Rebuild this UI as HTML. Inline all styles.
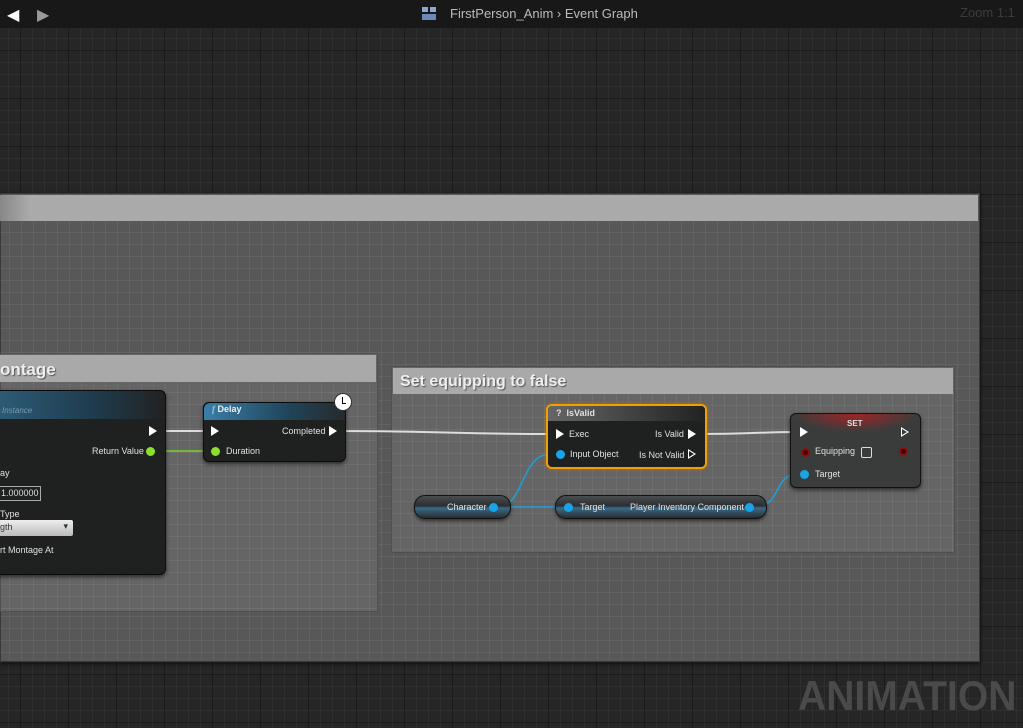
<!DOCTYPE html>
<html><head><style>
*{margin:0;padding:0;box-sizing:border-box}
body{width:1023px;height:728px;overflow:hidden;position:relative;font-family:"Liberation Sans",sans-serif;
background-color:#262626;
background-image:linear-gradient(#1b1b1b 1px,transparent 1px),linear-gradient(90deg,#1b1b1b 1px,transparent 1px),linear-gradient(#2f2f2f 1px,transparent 1px),linear-gradient(90deg,#2f2f2f 1px,transparent 1px);
background-size:48px 48px,48px 48px,12px 12px,12px 12px;background-position:20px 2px,20px 2px,8px 2px,8px 2px}
.a{position:absolute}
.grid{background-image:linear-gradient(rgba(255,255,255,.06) 1px,transparent 1px),linear-gradient(90deg,rgba(255,255,255,.06) 1px,transparent 1px);background-size:12px 12px;background-position:8px 2px}
.node{position:absolute;background:#1f2120;border:1px solid #0c0c0c;border-radius:6px;box-shadow:0 2px 4px rgba(0,0,0,.6);color:#ddd;font-size:9px}
.t{position:absolute;color:#e0e0e0;font-size:9px;white-space:nowrap}
.ex{position:absolute;width:0;height:0;border-top:5px solid transparent;border-bottom:5px solid transparent;border-left:8px solid #fff}
.dot{position:absolute;width:9px;height:9px;border-radius:50%}
.pill{position:absolute;height:24px;border-radius:11px;background:linear-gradient(#4a4d50,#2c2f31 45%,#3a6a88 55%,#2a2c2e);border:1px solid #111;box-shadow:0 2px 3px rgba(0,0,0,.5)}
</style></head><body>
<div class="a" style="left:0;top:0;width:1023px;height:28px;background:#181818"></div>
<div class="a" style="left:7px;top:5px;color:#fff;font-size:16px">&#9664;</div>
<div class="a" style="left:37px;top:5px;color:#999;font-size:16px">&#9654;</div>
<div class="a" style="left:422px;top:7px;width:6px;height:5px;background:#8aa9d8"></div>
<div class="a" style="left:430px;top:7px;width:6px;height:5px;background:#8aa9d8"></div>
<div class="a" style="left:422px;top:14px;width:14px;height:6px;background:#6d89b8"></div>
<div class="a" style="left:450px;top:6px;color:#bbb;font-size:13px">FirstPerson_Anim &#8250; Event Graph</div>
<div class="a" style="left:960px;top:5px;color:#3c3c3c;font-size:13px">Zoom 1:1</div>

<div class="a grid" style="left:0;top:193px;width:980px;height:469px;background-color:#585858;border:1px solid #3a3a3a;box-shadow:0 2px 4px rgba(0,0,0,.6)"></div>
<div class="a" style="left:0;top:195px;width:978px;height:26px;background:linear-gradient(90deg,#888,#aaa 30px,#aaa)"></div>

<div class="a grid" style="left:0;top:353px;width:378px;height:259px;background-color:#656565;border:1px solid #505050"></div>
<div class="a" style="left:0;top:355px;width:376px;height:27px;background:#a9a9a9"></div>
<div class="a" style="left:0;top:360px;color:#eee;font-size:17px;font-weight:bold;text-shadow:1px 1px 1px #555">ontage</div>

<div class="a grid" style="left:391px;top:366px;width:564px;height:187px;background-color:#656565;border:1px solid #505050"></div>
<div class="a" style="left:393px;top:368px;width:560px;height:26px;background:#a9a9a9"></div>
<div class="a" style="left:400px;top:373px;color:#eee;font-size:16px;font-weight:bold;text-shadow:1px 1px 1px #555">Set equipping to false</div>

<svg class="a" style="left:0;top:0" width="1023" height="728">
<path d="M158 431 L205 431" stroke="#ddd" stroke-width="2" fill="none"/>
<path d="M152 451 L208 451" stroke="#7fd42a" stroke-width="1.5" fill="none"/>
<path d="M338 431 C440 431,450 434,552 434" stroke="#ddd" stroke-width="2" fill="none"/>
<path d="M697 434 C750 434,760 432,800 432" stroke="#ddd" stroke-width="2" fill="none"/>
<path d="M497 507 C525 507,520 455,550 454" stroke="#1aa0e0" stroke-width="1.5" fill="none"/>
<path d="M497 507 L565 507" stroke="#1aa0e0" stroke-width="1.5" fill="none"/>
<path d="M752 507 C785 507,770 474,800 474" stroke="#1aa0e0" stroke-width="1.5" fill="none"/>
</svg>

<div class="node" style="left:-6px;top:390px;width:172px;height:185px">
 <div style="height:28px;border-radius:6px 6px 0 0;background:linear-gradient(90deg,#2d5c78,#1e3a4c 60%,#222);"></div>
</div>
<div class="t" style="left:2px;top:406px;color:#7a9bb0;font-style:italic;font-size:8px">Instance</div>
<div class="ex" style="left:149px;top:426px"></div>
<div class="t" style="left:92px;top:446px">Return Value</div>
<div class="dot" style="left:146px;top:447px;background:#8be02e"></div>
<div class="t" style="left:0;top:468px">ay</div>
<div class="a" style="left:-2px;top:486px;width:43px;height:15px;border:1px solid #aaa;color:#ddd;font-size:9px;padding:1px 2px">1.000000</div>
<div class="t" style="left:0;top:509px">Type</div>
<div class="a" style="left:-2px;top:520px;width:75px;height:16px;background:linear-gradient(#eee,#bbb);border-radius:2px;color:#333;font-size:9px;padding:2px 2px">gth<span style="position:absolute;right:5px;top:1px">&#9662;</span></div>
<div class="t" style="left:0;top:545px">rt Montage At</div>

<div class="node" style="left:203px;top:402px;width:143px;height:60px">
 <div style="height:17px;border-radius:6px 6px 0 0;background:linear-gradient(90deg,#3a7fa8,#20445a 60%,#262a2c)"></div>
</div>
<div class="t" style="left:212px;top:404px;font-weight:bold;color:#eee"><i style="font-family:'Liberation Serif',serif;color:#9cd">f</i> Delay</div>
<div class="a" style="left:334px;top:393px;width:18px;height:18px;border-radius:50%;background:#fff;border:1px solid #333"></div>
<div class="a" style="left:342px;top:397px;width:1px;height:6px;background:#000"></div>
<div class="a" style="left:342px;top:403px;width:4px;height:1px;background:#000"></div>
<div class="ex" style="left:211px;top:426px"></div>
<div class="t" style="left:282px;top:426px">Completed</div>
<div class="ex" style="left:329px;top:426px"></div>
<div class="dot" style="left:211px;top:447px;background:#8be02e"></div>
<div class="t" style="left:226px;top:446px">Duration</div>

<div class="node" style="left:546px;top:404px;width:161px;height:65px;border:2px solid #f0a000;box-shadow:0 0 3px #c07000">
 <div style="height:15px;border-radius:4px 4px 0 0;background:linear-gradient(90deg,#666,#444 50%,#222)"></div>
</div>
<div class="t" style="left:556px;top:408px;font-weight:bold">? &nbsp;IsValid</div>
<div class="ex" style="left:556px;top:429px"></div>
<div class="t" style="left:569px;top:429px">Exec</div>
<div class="t" style="left:655px;top:429px">Is Valid</div>
<div class="ex" style="left:688px;top:429px"></div>
<div class="dot" style="left:556px;top:450px;background:#16a4ea"></div>
<div class="t" style="left:570px;top:449px">Input Object</div>
<div class="t" style="left:639px;top:450px">Is Not Valid</div>
<div class="a" style="left:688px;top:449px;width:0;height:0;border-top:5px solid transparent;border-bottom:5px solid transparent;border-left:8px solid #fff"></div>
<div class="a" style="left:689px;top:451px;width:0;height:0;border-top:3px solid transparent;border-bottom:3px solid transparent;border-left:5px solid #1f2120"></div>

<div class="node" style="left:790px;top:413px;width:131px;height:75px;background:#3a3c3c;border-color:#111">
 <div style="height:18px;border-radius:6px 6px 0 0;background:radial-gradient(ellipse at 50% 0,#a02525,#3a3c3c 70%)"></div>
</div>
<div class="t" style="left:847px;top:419px;font-weight:bold;font-size:8px">SET</div>
<div class="ex" style="left:800px;top:427px"></div>
<div class="a" style="left:901px;top:427px;width:0;height:0;border-top:5px solid transparent;border-bottom:5px solid transparent;border-left:8px solid #fff"></div>
<div class="a" style="left:902px;top:429px;width:0;height:0;border-top:3px solid transparent;border-bottom:3px solid transparent;border-left:5px solid #3a3c3c"></div>
<div class="dot" style="left:801px;top:448px;background:#400;border:2px solid #8a1010"></div>
<div class="t" style="left:815px;top:446px">Equipping</div>
<div class="a" style="left:861px;top:447px;width:11px;height:11px;border:1.5px solid #ddd;border-radius:2px"></div>
<div class="dot" style="left:899px;top:447px;background:#400;border:2px solid #8a1010"></div>
<div class="dot" style="left:800px;top:470px;background:#16a4ea"></div>
<div class="t" style="left:815px;top:469px">Target</div>

<div class="pill" style="left:414px;top:495px;width:97px"></div>
<div class="t" style="left:447px;top:502px">Character</div>
<div class="dot" style="left:489px;top:503px;background:#16a4ea"></div>
<div class="pill" style="left:555px;top:495px;width:212px"></div>
<div class="dot" style="left:564px;top:503px;background:#16a4ea"></div>
<div class="t" style="left:580px;top:502px">Target</div>
<div class="t" style="left:630px;top:502px">Player Inventory Component</div>
<div class="dot" style="left:745px;top:503px;background:#16a4ea"></div>

<div class="a" style="left:798px;top:672px;color:#4a4a4a;font-size:42px;font-weight:bold;transform:scaleX(0.93);transform-origin:0 0">ANIMATION</div>
</body></html>
